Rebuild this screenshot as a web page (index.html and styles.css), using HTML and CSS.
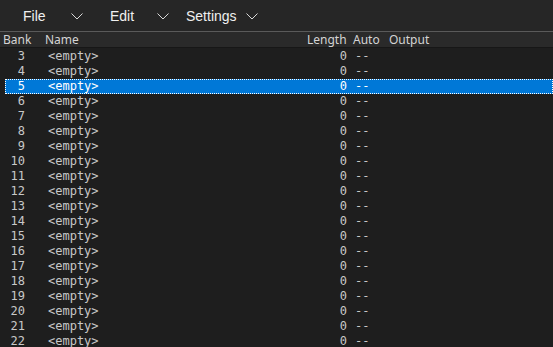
FILE: index.html
```html
<!DOCTYPE html>
<html lang="en">

<head>
    <meta charset="UTF-8">
    <title>Banks</title>
    <link rel="stylesheet" href="styles.css">
</head>

<body>
    <div class="menubar">
        <div class="menu">File <svg class="chev" viewBox="0 0 12 7"><path d="M0.5 0.5 L6 6 L11.5 0.5" /></svg></div>
        <div class="menu">Edit <svg class="chev" viewBox="0 0 12 7"><path d="M0.5 0.5 L6 6 L11.5 0.5" /></svg></div>
        <div class="menu">Settings <svg class="chev" viewBox="0 0 12 7"><path d="M0.5 0.5 L6 6 L11.5 0.5" /></svg></div>
    </div>

    <div class="header">
        <span class="h-bank">Bank</span>
        <span class="h-name">Name</span>
        <span class="h-length">Length</span>
        <span class="h-auto">Auto</span>
        <span class="h-output">Output</span>
    </div>

    <div class="list" id="list"></div>

    <script>
        const list = document.getElementById('list');
        for (let i = 3; i <= 22; i++) {
            const row = document.createElement('div');
            row.className = 'row' + (i === 5 ? ' selected' : '');
            row.innerHTML = `<span class="bank">${i}</span><span class="name">&lt;empty&gt;</span><span class="length">0</span><span class="auto">--</span><span class="output"></span>`;
            list.appendChild(row);
        }
    </script>
</body>

</html>
```

FILE: styles.css
```css
:root {
    --menu-bg: #262626;
    --header-bg: #2a2a2a;
    --list-bg: #1e1e1e;
    --text: #c8c8c8;
    --select: #0078d7;
}

* {
    box-sizing: border-box;
    margin: 0;
    padding: 0;
}

body {
    background-color: var(--list-bg);
    color: var(--text);
    height: 347px;
    overflow: hidden;
}

.menubar {
    display: flex;
    align-items: center;
    height: 32px;
    background-color: var(--menu-bg);
    border-bottom: 1px solid #5a5a5a;
    padding-left: 23px;
    font-family: "Liberation Sans", Arial, sans-serif;
    font-size: 14px;
    color: #f0f0f0;
}

.menu {
    display: flex;
    align-items: center;
}

.menu:nth-child(1) {
    width: 87px;
}

.menu:nth-child(2) {
    width: 76px;
}

.menu:nth-child(1) .chev {
    margin-left: 25px;
}

.menu:nth-child(2) .chev {
    margin-left: 23px;
}

.chev {
    width: 12px;
    height: 7px;
    margin-left: 9px;
    margin-top: 1px;
    fill: none;
    stroke: #d8d8d8;
    stroke-width: 1;
}

.header {
    display: flex;
    height: 16px;
    align-items: center;
    background-color: var(--header-bg);
    border-bottom: 1px solid #171717;
    font-family: "Noto Sans", "Open Sans", sans-serif;
    font-size: 12px;
    color: #d4d4d4;
    white-space: nowrap;
}

.h-bank {
    width: 45px;
    padding-left: 3px;
}

.h-name {
    width: 262px;
}

.h-length {
    width: 46px;
}

.h-auto {
    width: 36px;
}

.list {
    padding-left: 5px;
    padding-top: 1px;
}

.row {
    display: grid;
    grid-template-columns: 20px 275px 47px 40px 1fr;
    height: 15px;
    line-height: 15px;
    font-family: "DejaVu Sans Mono", "Liberation Mono", monospace;
    font-size: 12px;
    white-space: nowrap;
}

.row .bank {
    text-align: right;
}

.row .name {
    padding-left: 23px;
}

.row .length {
    text-align: right;
}

.row .auto {
    padding-left: 8px;
}

.row.selected {
    background-color: var(--select);
    color: #ffffff;
    outline: 1px dotted #ffffff;
    outline-offset: -1px;
}
```
